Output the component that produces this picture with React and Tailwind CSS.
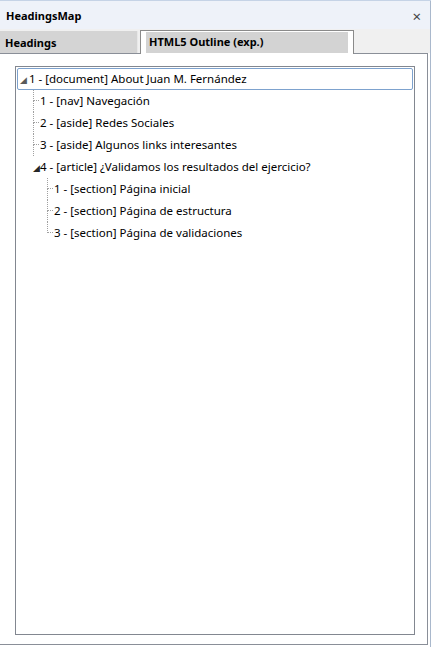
import React from 'react';

const children = [
  '1 - [nav] Navegación',
  '2 - [aside] Redes Sociales',
  '3 - [aside] Algunos links interesantes',
];

const sections = [
  '1 - [section] Página inicial',
  '2 - [section] Página de estructura',
  '3 - [section] Página de validaciones',
];

function Connector({ last }) {
  return (
    <div className="flex flex-col w-[6px] h-[22px] shrink-0">
      <div className="h-[11px] border-l border-b border-dotted border-[#a0a0a0]" />
      <div className={`h-[11px] ${last ? '' : 'border-l border-dotted border-[#a0a0a0]'}`} />
    </div>
  );
}

function Row({ label, last }) {
  return (
    <div className="flex items-center h-[22px]">
      <Connector last={last} />
      <span className="pl-[1px] whitespace-nowrap">{label}</span>
    </div>
  );
}

export default function App() {
  return (
    <div
      className="w-[431px] h-[647px] bg-white flex flex-col border-t border-[#c5d3e6] text-[#000]"
      style={{ fontFamily: '"Noto Sans", "Open Sans", sans-serif' }}
    >
      <div className="h-[28px] bg-[#eef2f9] flex items-center justify-between pl-[6px] pr-[9px] pt-[3px] border-r border-[#a9b8cc]">
        <span className="font-bold text-[11px]">HeadingsMap</span>
        <span className="text-[15px] leading-none text-[#444]">×</span>
      </div>
      <div className="h-[24px] bg-[#f0f0f0] flex items-end border-r border-[#a9b8cc]">
        <div className="w-[138px] h-[22px] bg-[#d4d4d4] border-r border-[#e8e8e8] flex items-center pl-[5px] pt-[2px] font-bold text-[11px]">
          Headings
        </div>
        <div className="ml-[2px] w-[214px] h-[24px] bg-white border border-b-0 border-[#8a8a8a] px-[5px] pt-[1px] relative top-[1px]">
          <div className="h-[21px] bg-[#d3d3d3] flex items-center pl-[3px] font-bold text-[11px]">
            HTML5 Outline (exp.)
          </div>
        </div>
      </div>
      <div className="flex-1 flex pr-[2px] pb-[2px] border-r border-[#a9b8cc]">
        <div className="flex-1 border-t border-r border-b border-[#8a8f98] pt-[12px] pl-[15px] pr-[12px] pb-[9px] flex">
          <div className="flex-1 border border-[#828790] p-[1px] text-[11.5px]">
            <div className="h-[22px] flex items-center border border-[#7da2ce] rounded-[2px] pl-[2px]">
              <span className="text-[9px] text-[#5a5a5a] w-[9px] leading-none">◢</span>
              <span className="whitespace-nowrap">1 - [document] About Juan M. Fernández</span>
            </div>
            <div className="pl-[16px]">
              {children.map((c) => (
                <Row key={c} label={c} />
              ))}
              <div className="flex items-center h-[22px]">
                <div className="w-[7px] flex justify-start">
                  <span className="text-[9px] text-[#262626] leading-none">◢</span>
                </div>
                <span className="whitespace-nowrap">4 - [article] ¿Validamos los resultados del ejercicio?</span>
              </div>
              <div className="pl-[14px]">
                {sections.map((s, i) => (
                  <Row key={s} label={s} last={i === sections.length - 1} />
                ))}
              </div>
            </div>
          </div>
        </div>
      </div>
    </div>
  );
}
